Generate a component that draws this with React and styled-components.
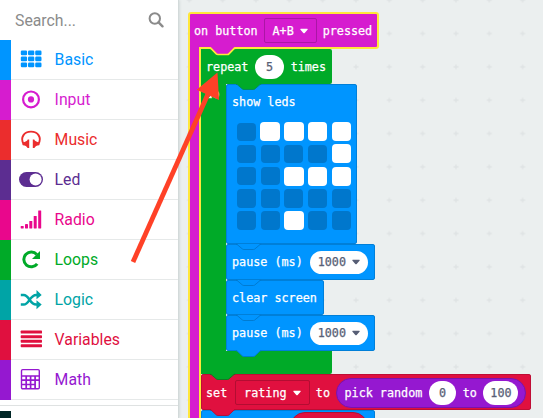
import React from "react";
import styled, { createGlobalStyle, css } from "styled-components";

const Global = createGlobalStyle`
  * { box-sizing: border-box; }
  html, body { margin: 0; overflow: hidden; }
`;

const blue = "#0095ff";
const green = "#00aa28";
const magenta = "#d61ccf";
const red = "#e0103f";
const purple = "#9518d0";
const highlight = "#ffe73b";

const Editor = styled.div`
  position: relative;
  display: flex;
  width: 543px;
  height: 418px;
  overflow: hidden;
  background: #ebefef;
`;

/* ---------- toolbox ---------- */
const Toolbox = styled.nav`
  flex: none;
  width: 179px;
  background: #fff;
  border-right: 1px solid #d3dada;
  box-shadow: 0 0 3px #c4cece;
  font-family: Roboto, sans-serif;
  font-size: 15.8px;
  z-index: 1;
`;
const Search = styled.div`
  display: flex;
  align-items: center;
  justify-content: space-between;
  height: 40px;
  padding: 0 14px 0 15px;
  color: #8b8b8b;
`;
const Category = styled.div`
  display: flex;
  align-items: flex-start;
  height: 40px;
  color: ${(p) => p.$color};
  background: linear-gradient(${(p) => p.$color}, ${(p) => p.$color}) 0 0 / 11px 100% no-repeat;
`;
const CategoryIcon = styled.svg`
  width: 24px;
  height: 24px;
  margin: 7px 0 0 20px;
  overflow: visible;
`;
const CategoryName = styled.span`
  flex: 1;
  margin-left: 10.6px;
  line-height: 40px;
`;
const RowLine = styled.div`
  height: 1px;
  margin: -1px 0 0 11px;
  background: #e6e9e9;
`;
const Separator = styled.div`
  height: 1px;
  margin: 5px 0;
  background: #dfe2e2;
`;
const AdvancedBar = styled.div`
  width: 11px;
  height: 10px;
  background: #002626;
`;

const icons = {
  Basic: [3.6, 9.6, 15.6].map((y, r) =>
    [0.8, 8, 15.2].map((x) => <rect key={x + "-" + r} x={x} y={y} width="6.3" height="4.6" rx="1.2" />)
  ),
  Input: (
    <>
      <circle cx="11" cy="12.4" r="7.9" fill="none" stroke="currentColor" strokeWidth="2.2" />
      <circle cx="11" cy="12.4" r="3.1" />
    </>
  ),
  Music: (
    <>
      <path d="M3.6 17C-.2 10.500 4.200 4.600 11 4.600S22.200 10.500 18.400 17" fill="none" stroke="currentColor" strokeWidth="1.900" />
      <path d="M9.200 12.400v8.600H7.600C6.800 19.300 5.300 18.300 2.800 18.200c-.9-1.500 0-3 1.700-3.300 1.700-.4 2.700-1.200 3.200-2.500zM12.800 12.400v8.600h1.600c.8-1.700 2.300-2.700 4.800-2.800.9-1.500 0-3-1.700-3.300-1.700-.4-2.700-1.200-3.200-2.500z" />
    </>
  ),
  Led: (
    <>
      <rect x="-1" y="5" width="24" height="15" rx="7.5" />
      <circle cx="15.6" cy="12.5" r="6" fill="#fff" />
    </>
  ),
  Radio: [[0.7, 2.5], [5, 4.3], [9.3, 7.3], [13.7, 12.3], [18.2, 18]].map(([x, h]) => (
    <rect key={x} x={x} y={21.4 - h} width="3" height={h} rx=".4" />
  )),
  Loops: (
    <>
      <path d="M16.800 7.500a7.400 7.400 0 1 0 .4 9.300" fill="none" stroke="currentColor" strokeWidth="3" />
      <path d="M20 4v8h-8z" />
    </>
  ),
  Logic: (
    <>
      <path d="M.8 8h2.900c5.500 0 6 9.600 12.500 9.600h2M.8 17.600h2.900c5.500 0 6-9.600 12.500-9.600h2" fill="none" stroke="currentColor" strokeWidth="2.500" />
      <path d="M16.500 3l5.200 5-5.200 4.300zM16.500 13.300l5.200 4.300-5.200 4.600z" />
    </>
  ),
  Variables: [3.6, 8.2, 12.7, 17.3].map((y) => <rect key={y} x=".7" y={y} width="21.3" height="3" rx=".7" />),
  Math: (
    <g fill="none" stroke="currentColor" strokeWidth="1.4">
      <rect x="1.500" y="2.600" width="17.800" height="19.200" rx="1.200" />
      <path d="M1.500 9h17.800M1.500 13.200h17.800M1.500 17.500h13.600M6.200 9v12.800M10.600 9v12.800M15.100 9v12.800" strokeWidth="1.700" />
    </g>
  ),
};

const categories = [
  ["Basic", blue],
  ["Input", magenta],
  ["Music", "#eb2d2d"],
  ["Led", "#5c2d91"],
  ["Radio", "#e9078c"],
  ["Loops", green],
  ["Logic", "#00a4a6"],
  ["Variables", red],
  ["Math", purple],
];

/* ---------- workspace ---------- */
const Workspace = styled.main`
  position: relative;
  flex: 1;
  height: 418px;
  overflow: hidden;
  padding: 12px 0 0 9px;
  color: #fff;
  font: 11.75px/16px "DejaVu Sans Mono", monospace;
  -webkit-text-stroke: 0.25px;
  white-space: pre;
`;
const GridDots = styled.svg`
  position: absolute;
  inset: 0;
  width: 100%;
  height: 100%;
`;
const HatBlock = styled.section`
  position: relative;
  display: flex;
  flex-direction: column;
  width: 343px;
`;
const HatHeader = styled.div`
  display: flex;
  align-items: center;
  width: 191px;
  height: 37px;
  padding-left: 4px;
  background: ${magenta};
  border: 2px solid ${highlight};
  border-radius: 3px 3px 3px 0;
`;
const HatBody = styled.div`
  width: 343px;
  height: 380px;
  margin-top: -2px;
  padding: 2px 0 0 13px;
  background: linear-gradient(90deg, ${highlight} 1.7px, ${magenta} 1.7px 11.2px, ${highlight} 11.2px 13px, transparent 13px);
`;
const LoopBlock = styled.div`
  position: relative;
  width: 131px;
  padding-left: 25px;
  background: linear-gradient(${green}, ${green}) 0 0 / 25px 100% no-repeat;
`;
const LoopHeader = styled.div`
  position: relative;
  display: flex;
  align-items: center;
  width: 131px;
  height: 34.7px;
  margin-left: -25px;
  padding: 1px 0 0 5px;
  background: ${green};
  border-radius: 0 2px 2px 0;
`;
const LoopFooter = styled.div`
  position: relative;
  width: 131px;
  height: 23.8px;
  margin-left: -25px;
  background: ${green};
  border-radius: 0 0 2px 0;
`;
const DoLabel = styled.span`
  position: absolute;
  left: 4.5px;
  top: 37px;
`;
const Statement = styled.div`
  position: relative;
  display: flex;
  align-items: center;
  width: ${(p) => p.$w}px;
  height: ${(p) => p.$h}px;
  padding: 1px 0 0 ${(p) => p.$pad || 6}px;
  background: ${(p) => p.$color};
  border-radius: 3px;
  box-shadow: inset 0 0 0 0.7px ${(p) => p.$edge};
`;
const ShowLeds = styled(Statement)`
  flex-direction: column;
  align-items: flex-start;
  padding-top: 10px;
`;
const LedGrid = styled.div`
  display: grid;
  grid-template-columns: repeat(5, 19.4px);
  grid-auto-rows: 19px;
  gap: 3.2px 4.3px;
  margin: 12.6px 0 0 4.8px;
`;
const Led = styled.i`
  border-radius: 4px;
  background: ${(p) => (p.$on ? "#fff" : "#0077cc")};
  ${(p) => !p.$on && css`margin: 0.3px;`}
`;
const Pill = styled.span`
  display: flex;
  align-items: center;
  justify-content: center;
  gap: 6px;
  width: ${(p) => p.$w}px;
  height: 23.4px;
  margin: 0 ${(p) => p.$gap || 0}px;
  border-radius: 12px;
  background: #fff;
  color: #575e75;
`;
const Dropdown = styled.span`
  display: flex;
  align-items: center;
  justify-content: center;
  gap: 6px;
  width: ${(p) => p.$w}px;
  height: 25px;
  margin: 0 6px 0 ${(p) => p.$before || 6}px;
  border: 1px solid ${(p) => p.$edge};
  border-radius: 2px;
`;
const Reporter = styled.span`
  display: flex;
  align-items: center;
  width: 190px;
  height: 30px;
  margin-left: 6px;
  padding-left: 7.5px;
  background: ${purple};
  border: 1px solid #7a13aa;
  border-radius: 15px;
`;
const NotchSvg = styled.svg`
  position: absolute;
  left: ${(p) => p.$x}px;
  top: -2px;
`;
const VariablePill = styled.span`
  align-self: flex-start;
  width: 78px;
  height: 30px;
  margin: 1px 0 0 83px;
  background: ${red};
  border: 1px solid #b30d32;
  border-radius: 15px;
`;
const ArrowOverlay = styled.svg`
  position: absolute;
  left: 0;
  top: 0;
  z-index: 3;
`;

/* The connector of the block above, hanging into the top edge of this one. */
const Notch = ({ fill, stroke, x = 10, width = 0.9, lift = 0 }) => (
  <NotchSvg $x={x} width="26" height="10" viewBox="0 -2 26 10">
    <path d={`M1 ${-lift}V0l5.300 5q.7.600 1.600.600h9.500q.9 0 1.500-.600L24.200 0V${-lift}z`} fill={fill} />
    <path d={`M0 ${0.4 - lift / 2}h1l5.300 ${4.5 + lift / 2}q.7.600 1.600.600h9.500q.9 0 1.500-.600L24.200 ${0.4 - lift / 2}h1`} fill="none" stroke={stroke} strokeWidth={width} />
  </NotchSvg>
);
const Caret = () => (
  <svg width="8" height="6" viewBox="0 0 8 6" fill="currentColor">
    <path d="M.7.7h6.600q.8.3.2 1L4.700 4.900q-.7.6-1.400 0L.500 1.700q-.5-.7.2-1z" />
  </svg>
);

const leds = ["01111", "00001", "00111", "00000", "00100"].join("");
const blueEdge = "#0078cc";
const redEdge = "#b30d32";

const Pause = () => (
  <Statement $w={149} $h={35.7} $color={blue} $edge={blueEdge}>
    <Notch fill={blue} stroke={blueEdge} />
    pause (ms)
    <Pill $w={58.5} $gap={7}>1000<Caret /></Pill>
  </Statement>
);

export default function App() {
  return (
    <Editor>
      <Global />
      <Toolbox>
        <Search>
          Search...
          <svg width="16" height="16" viewBox="0 0 16 16" fill="none" stroke="#8b8b8b">
            <circle cx="6.800" cy="6.500" r="5.200" strokeWidth="2" />
            <path d="M10.600 10.400l3.900 3.900" strokeWidth="2.400" strokeLinecap="round" />
          </svg>
        </Search>
        {categories.map(([name, color]) => (
          <React.Fragment key={name}>
            <Category $color={color}>
              <CategoryIcon viewBox="0 0 24 24" fill="currentColor">{icons[name]}</CategoryIcon>
              <CategoryName>{name}</CategoryName>
            </Category>
            <RowLine />
          </React.Fragment>
        ))}
        <Separator />
        <AdvancedBar />
      </Toolbox>

      <Workspace>
        <GridDots>
          <defs>
            <pattern id="grid" x="-6.370" y="-16.470" width="33.333" height="33.333" patternUnits="userSpaceOnUse">
              <path d="M14.200 16.670h5M16.670 14.200v5" stroke="#dfe3e4" strokeWidth="1.300" />
            </pattern>
          </defs>
          <rect width="100%" height="100%" fill="url(#grid)" />
        </GridDots>
        <HatBlock>
          <HatHeader>
            on button
            <Dropdown $w={53} $edge="#ab16a6">A+B<Caret /></Dropdown>
            pressed
          </HatHeader>
          <HatBody>
            <LoopBlock>
              <LoopHeader>
                <Notch fill={magenta} stroke={highlight} x={8.7} width={1.7} lift={2} />
                repeat
                <Pill $w={28.8} $gap={6.7}>5</Pill>
                times
              </LoopHeader>
              <DoLabel>do</DoLabel>
              <ShowLeds $w={131} $h={160.3} $color={blue} $edge={blueEdge}>
                <Notch fill={green} stroke="#008a55" />
                show leds
                <LedGrid>
                  {leds.split("").map((v, i) => <Led key={i} $on={v === "1"} />)}
                </LedGrid>
              </ShowLeds>
              <Pause />
              <Statement $w={98} $h={35.3} $color={blue} $edge={blueEdge}>
                <Notch fill={blue} stroke={blueEdge} />
                clear screen
              </Statement>
              <Pause />
              <LoopFooter>
                <Notch fill={blue} stroke={blueEdge} x={35} lift={1} />
              </LoopFooter>
            </LoopBlock>
            <Statement $w={330} $h={36} $pad={5} $color={red} $edge={redEdge}>
              <Notch fill={green} stroke="#0a7a20" x={9} />
              set
              <Dropdown $w={75} $before={7.6} $edge={redEdge}>rating<Caret /></Dropdown>
              to
              <Reporter>
                pick random
                <Pill $w={29} $gap={6.5}>0</Pill>
                to
                <Pill $w={37} $gap={6.5}>100</Pill>
              </Reporter>
            </Statement>
            <Statement $w={174} $h={36} $color={blue} $edge={blueEdge}>
              <Notch fill={red} stroke={redEdge} x={9} lift={1} />
              <VariablePill />
            </Statement>
          </HatBody>
        </HatBlock>
      </Workspace>

      <ArrowOverlay width="543" height="418" viewBox="0 0 543 418">
        <path d="M133 262L208 94" stroke="#ff4127" strokeWidth="4.800" />
        <path d="M217.500 72.500L196.700 89.800L219 100z" fill="#ff4127" />
      </ArrowOverlay>
    </Editor>
  );
}
